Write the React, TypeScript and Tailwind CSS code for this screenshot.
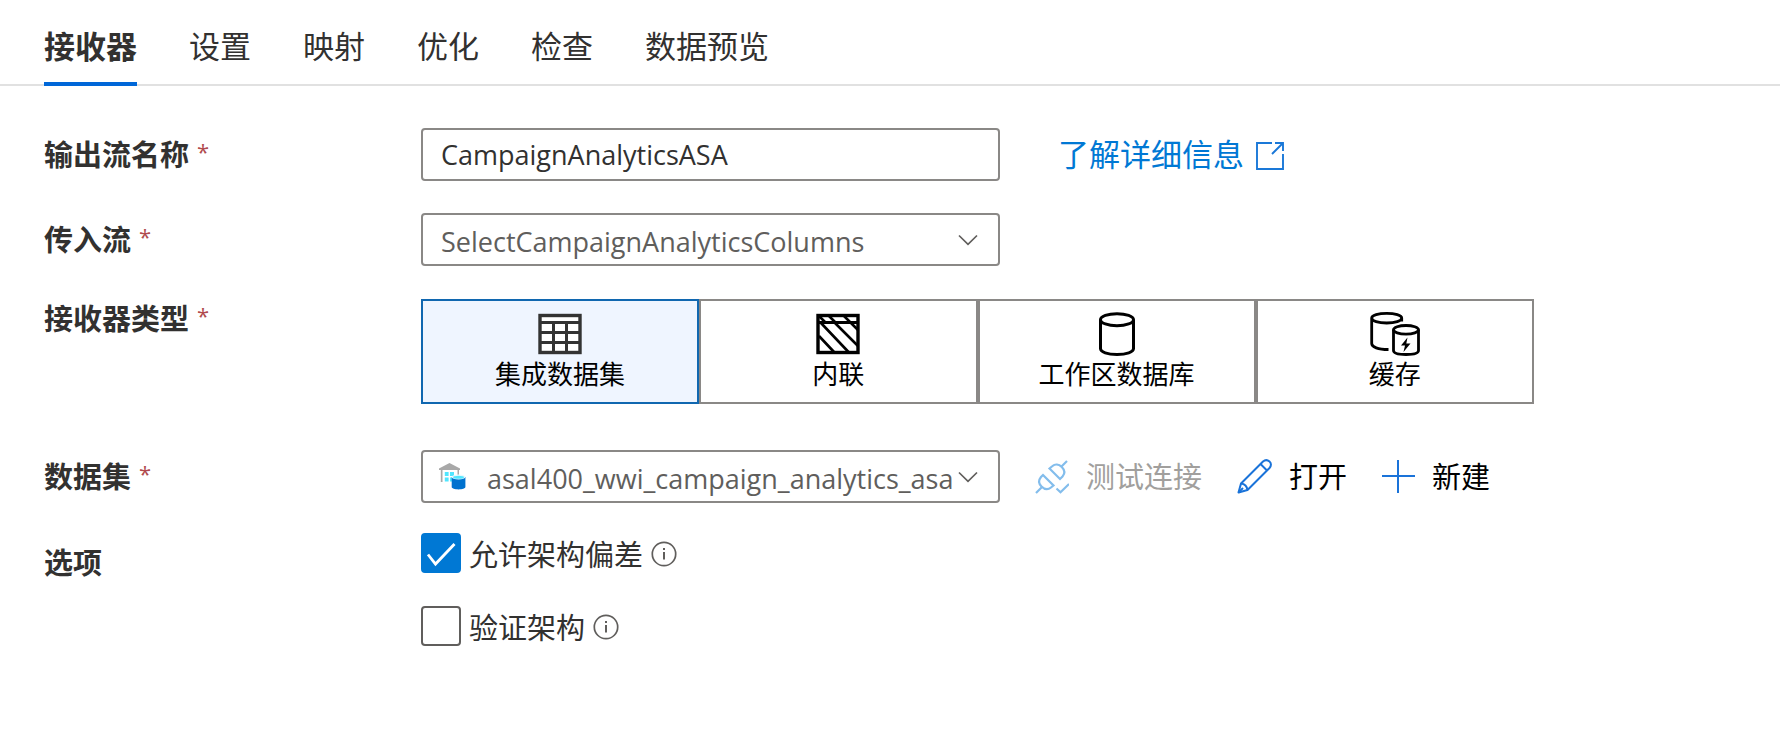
import { useState, type ReactNode } from "react";

const tabs = ["接收器", "设置", "映射", "优化", "检查", "数据预览"];

function TableIcon() {
  return (
    <svg className="h-11 w-11" viewBox="0 0 44 44" fill="none" stroke="#333" aria-hidden="true">
      <rect x="2" y="3.5" width="40" height="37" fill="#fff" strokeWidth="3.4" />
      <path d="M2 10.5H42M2 20.5H42M2 30.5H42M15.5 10V40M28.5 10V40" strokeWidth="3" />
    </svg>
  );
}

function InlineIcon() {
  return (
    <svg className="h-11 w-11" viewBox="0 0 44 44" fill="none" stroke="#000" aria-hidden="true">
      <rect x="2" y="3.5" width="40" height="37" strokeWidth="3.4" />
      <path d="M2 10.5H42" strokeWidth="3" />
      <path
        d="M3 24L18 40M5 11L32.500 40M19 11L42 34M34 10L42 18M3 4L9 10M13 4L19 10M28 4L34 10"
        strokeWidth="2.6"
      />
    </svg>
  );
}

function DatabaseIcon() {
  return (
    <svg className="h-11 w-11" viewBox="0 0 44 44" fill="none" stroke="#000" strokeWidth="3" aria-hidden="true">
      <ellipse cx="22" cy="7.700" rx="16.500" ry="6" />
      <path d="M5.500 7.700V36.500C5.500 40 12.500 42.500 22 42.500S38.500 40 38.500 36.500V7.700" />
    </svg>
  );
}

function CacheIcon() {
  return (
    <svg className="h-11 w-[50px]" viewBox="0 0 50 44" fill="none" stroke="#000" strokeWidth="2.800" aria-hidden="true">
      <path d="M18.500 37.500C8 37.500 1.700 35 1.700 31.500V6C1.700 3.300 8.500 1.400 16.700 1.400S31.700 3.300 31.700 6C31.700 9 25 11 16.700 11S1.700 9 1.700 6M31.700 6V9.500" />
      <ellipse cx="36" cy="17.800" rx="12.500" ry="4.300" />
      <path d="M23.500 17.800V38.500C23.500 41.300 29 42.500 36 42.500S48.500 41.300 48.500 38.500V17.800" />
      <path d="M37.500 25.500L31 33.500H35L33.500 40L40.500 31.500H36.300Z" fill="#000" stroke="none" />
    </svg>
  );
}

function DatasetIcon() {
  return (
    <svg className="h-[27px] w-[27px]" viewBox="0 0 27 27" aria-hidden="true">
      <path d="M10.500 0L21 5.500V7H20V13H18.500V7H3.500V19H1.800V7H0V5.500Z" fill="#a8a8a8" />
      <path d="M5.800 9H9.600V13H5.800ZM11 9H15V13H11ZM5.800 14.500H9.600V18.500H5.800ZM11 14.500H15V18.500H11Z" fill="#50e6ff" />
      <path d="M12.700 14V24C12.700 25.300 15.700 26.400 19.500 26.400S26.400 25.300 26.400 24V14Z" fill="#0072cf" />
      <ellipse cx="19.550" cy="14" rx="6.850" ry="2.500" fill="#e8f8fc" />
      <ellipse cx="19.550" cy="14.300" rx="5.400" ry="1.500" fill="#50e6ff" />
    </svg>
  );
}

function Chevron() {
  return (
    <svg className="h-3 w-5" viewBox="0 0 20 12" fill="none" stroke="#605e5c" strokeWidth="1.700" aria-hidden="true">
      <path d="M1 1.500L10 10.300L19 1.500" />
    </svg>
  );
}

function PlugIcon() {
  return (
    <svg className="h-[34px] w-[34px]" viewBox="0 0 34 34" fill="none" stroke="#83bdec" strokeWidth="2.2" aria-hidden="true">
      <path d="M1 33L7 27M32 1L26 7" />
      <path d="M8 15L18.500 25.500L16 27.500C13 30 9.500 29.500 6.500 26.500S3.500 20 6 17Z" />
      <path d="M14.500 8.500L25 19L27.500 16.500C30 13.500 29.800 10 26.800 7S20 3.800 17.500 6Z" />
      <path d="M21.500 28.500L25.500 32.300L34 24" />
    </svg>
  );
}

function PencilIcon() {
  return (
    <svg className="h-[35px] w-[35px]" viewBox="0 0 35 35" fill="none" stroke="#1a73d9" strokeWidth="2" strokeLinejoin="round" aria-hidden="true">
      <path d="M1.500 33.500L4 24.500L26 2.500C28 .8 30.500 .8 32.500 2.500S34.300 7 32.500 9L10.500 31Z" />
      <path d="M4 24.500C7.500 25 10 27.500 10.500 31M23.500 5L30 11.500M1.500 33.500L6 29" />
    </svg>
  );
}

function PlusIcon() {
  return (
    <svg className="h-[33px] w-[33px]" viewBox="0 0 33 33" fill="none" stroke="#1a73d9" strokeWidth="2" aria-hidden="true">
      <path d="M16 0V33M0 16H33" />
    </svg>
  );
}

function ExternalIcon() {
  return (
    <svg className="mt-1 h-7 w-7" viewBox="0 0 28 28" fill="none" stroke="#1a78d8" strokeWidth="1.900" aria-hidden="true">
      <path d="M16 1H1V27H27V12M19 1H27V9M27 1L16 12" />
    </svg>
  );
}

function InfoIcon() {
  return (
    <svg className="h-[26px] w-[26px]" viewBox="0 0 26 26" fill="none" stroke="#605e5c" strokeWidth="1.700" aria-hidden="true">
      <circle cx="13" cy="13" r="11.700" />
      <path d="M13 11V18.500M13 7V9" strokeWidth="2" />
    </svg>
  );
}

const sinkTypes = [
  { id: "dataset", label: "集成数据集", icon: <TableIcon /> },
  { id: "inline", label: "内联", icon: <InlineIcon /> },
  { id: "workspace", label: "工作区数据库", icon: <DatabaseIcon /> },
  { id: "cache", label: "缓存", icon: <CacheIcon /> },
];

function Required() {
  return <span className="ml-2 align-[6px] text-[22px] leading-none font-normal text-[#b04a4e]">*</span>;
}

function Row({ label, children }: { label: ReactNode; children: ReactNode }) {
  return (
    <div className="grid grid-cols-[377px_minmax(0,1fr)] items-center">
      {label}
      {children}
    </div>
  );
}

function CheckOption({ label, defaultChecked }: { label: string; defaultChecked?: boolean }) {
  return (
    <div className="flex items-center gap-2">
      <label className="flex h-10 items-center gap-2">
        <span className="grid h-10 w-10 shrink-0">
          <input
            type="checkbox"
            defaultChecked={defaultChecked}
            className="peer col-start-1 row-start-1 appearance-none rounded-[4px] border-2 border-[#605e5c] bg-white checked:border-[#0078d4] checked:bg-[#0078d4]"
          />
          <svg
            className="pointer-events-none invisible col-start-1 row-start-1 h-10 w-10 peer-checked:visible"
            viewBox="0 0 40 40"
            fill="none"
            stroke="#fff"
            strokeWidth="2.800"
            aria-hidden="true"
          >
            <path d="M7 21.500L14.500 31L33.500 11" />
          </svg>
        </span>
        <span className="pt-1 leading-10">{label}</span>
      </label>
      <button type="button" aria-label="信息" className="pt-0.5">
        <InfoIcon />
      </button>
    </div>
  );
}

export default function App() {
  const [tab, setTab] = useState(tabs[0]);
  const [sink, setSink] = useState("dataset");

  return (
    <main className="min-h-screen bg-white font-['Open_Sans','Noto_Sans_CJK_SC',sans-serif] text-[29px] text-[#323130]">
      <nav role="tablist" className="flex gap-[52px] px-11 text-[31px] shadow-[inset_0_-2px_0_#e1e1e1]">
        {tabs.map((name) => (
          <button
            key={name}
            type="button"
            role="tab"
            aria-selected={tab === name}
            onClick={() => setTab(name)}
            className={
              tab === name
                ? "border-b-4 border-[#0067d8] pt-[23px] pb-[13px] leading-[46px] font-bold"
                : "border-b-4 border-transparent pt-[23px] pb-[13px] leading-[46px]"
            }
          >
            {name}
          </button>
        ))}
      </nav>

      <form className="flex flex-col px-11 pt-[42px]" onSubmit={(e) => e.preventDefault()}>
        <Row
          label={
            <label htmlFor="stream" className="font-bold leading-10">
              输出流名称
              <Required />
            </label>
          }
        >
          <div className="flex items-center gap-[58px]">
            <input
              id="stream"
              defaultValue="CampaignAnalyticsASA"
              className="h-[53px] w-[579px] rounded-[4px] border-2 border-[#8a8886] px-[18px] text-[27px]"
            />
            <a href="#learn" className="flex items-center gap-3 pb-0.5 text-[31px] leading-10 text-[#0078d4]">
              了解详细信息
              <ExternalIcon />
            </a>
          </div>
        </Row>

        <div className="mt-8">
          <Row
            label={
              <label htmlFor="incoming" className="font-bold leading-10">
                传入流
                <Required />
              </label>
            }
          >
            <div className="grid w-[579px] grid-cols-[minmax(0,1fr)] items-center">
              <select
                id="incoming"
                className="col-start-1 row-start-1 h-[53px] appearance-none rounded-[4px] border-2 border-[#8a8886] bg-white pt-1.5 pr-11 pl-[18px] text-[27px] text-[#605e5c]"
              >
                <option>SelectCampaignAnalyticsColumns</option>
              </select>
              <span className="pointer-events-none col-start-1 row-start-1 mr-[22px] justify-self-end">
                <Chevron />
              </span>
            </div>
          </Row>
        </div>

        <fieldset className="mt-[33px]">
          <Row
            label={
              <span id="sink-type" className="self-start font-bold leading-10">
                接收器类型
                <Required />
              </span>
            }
          >
            <div role="radiogroup" aria-labelledby="sink-type" className="grid max-w-[1113px] grid-cols-4 text-[26px] text-black">
              {sinkTypes.map((t) => (
                <label
                  key={t.id}
                  className={
                    sink === t.id
                      ? "flex h-[105px] flex-col items-center gap-1 border-2 border-[#1067b0] bg-[#eff5ff] pt-[11px]"
                      : "flex h-[105px] flex-col items-center gap-1 border-2 border-[#8a8886] bg-white pt-[11px]"
                  }
                >
                  <input
                    type="radio"
                    name="sink"
                    className="sr-only"
                    checked={sink === t.id}
                    onChange={() => setSink(t.id)}
                  />
                  {t.icon}
                  <span className="leading-7">{t.label}</span>
                </label>
              ))}
            </div>
          </Row>
        </fieldset>

        <div className="mt-[46px]">
          <Row
            label={
              <label htmlFor="dataset" className="font-bold leading-10">
                数据集
                <Required />
              </label>
            }
          >
            <div className="flex items-center gap-[35px]">
              <div className="grid w-[579px] grid-cols-[minmax(0,1fr)] items-center">
                <select
                  id="dataset"
                  className="col-start-1 row-start-1 h-[53px] appearance-none rounded-[4px] border-2 border-[#8a8886] bg-white pt-1.5 pr-11 pl-16 text-[27px] text-[#605e5c]"
                >
                  <option>asal400_wwi_campaign_analytics_asa</option>
                </select>
                <span className="pointer-events-none col-start-1 row-start-1 ml-[18px] justify-self-start">
                  <DatasetIcon />
                </span>
                <span className="pointer-events-none col-start-1 row-start-1 mr-[22px] justify-self-end">
                  <Chevron />
                </span>
              </div>
              <button type="button" disabled className="flex items-center gap-[17px] leading-10 text-[#a19f9d]">
                <PlugIcon />
                测试连接
              </button>
              <button type="button" className="flex items-center gap-[17px] leading-10 text-black">
                <PencilIcon />
                打开
              </button>
              <button type="button" className="flex items-center gap-[17px] leading-10 text-black">
                <PlusIcon />
                新建
              </button>
            </div>
          </Row>
        </div>

        <fieldset className="mt-[30px]">
          <Row
            label={
              <span className="self-start pt-2.5 font-bold leading-10">选项</span>
            }
          >
            <div className="flex flex-col gap-[33px]">
              <CheckOption label="允许架构偏差" defaultChecked />
              <CheckOption label="验证架构" />
            </div>
          </Row>
        </fieldset>
      </form>
    </main>
  );
}
